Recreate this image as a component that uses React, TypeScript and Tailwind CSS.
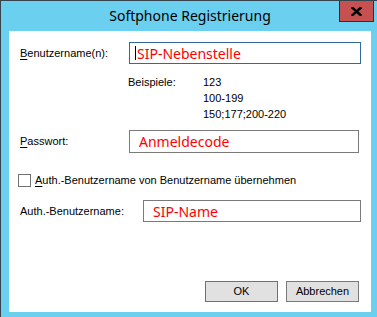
import React from "react";

const F = { fontFamily: '"Liberation Sans", Arial, sans-serif' };
const R = { fontFamily: '"Noto Sans", "Liberation Sans", sans-serif' };

export default function App() {
  return (
    <div className="relative w-[377px] h-[317px] bg-[#6bcff0] border-l border-t border-[#34434c] flex flex-col overflow-hidden">
      {/* title bar */}
      <div className="h-[30px] flex items-center justify-center pl-[2px] pb-[2px]">
        <span className="text-[14px] text-black" style={R}>Softphone Registrierung</span>
      </div>
      <div className="absolute left-[338px] top-0 w-[35px] h-[21px] bg-[#c75050] border border-t-0 border-[#3b2b2b] flex items-center justify-center">
        <svg width="11" height="9" viewBox="0 0 11 9">
          <path d="M1.5 1 L9.5 8 M9.5 1 L1.5 8" stroke="#000" strokeWidth="2.4" strokeLinecap="square" />
        </svg>
      </div>
      {/* client */}
      <div className="ml-[8px] w-[362px] h-[281px] bg-white flex flex-col pl-[11px] pr-[10px] text-[11px] text-black" style={F}>
        <div className="mt-[11px] h-[22px] flex items-center">
          <span className="w-[109px]"><span className="underline underline-offset-2">B</span>enutzername(n):</span>
          <div className="w-[232px] h-[22px] border border-[#2f6a9b] flex items-center pl-[5px]">
            <span className="w-px h-[14px] bg-black mr-[1px]" />
            <span className="text-[14px] text-[#ff0000]" style={R}>SIP-Nebenstelle</span>
          </div>
        </div>
        <div className="mt-[10px] flex leading-[16px] pl-[108px]">
          <span className="w-[75px]">Beispiele:</span>
          <div className="flex flex-col">
            <span>123</span>
            <span>100-199</span>
            <span>150;177;200-220</span>
          </div>
        </div>
        <div className="mt-[8px] h-[23px] flex items-center">
          <span className="w-[109px]"><span className="underline underline-offset-2">P</span>asswort:</span>
          <div className="w-[230px] h-[23px] border border-[#7a7a7a] flex items-center pl-[9px]">
            <span className="text-[14px] text-[#ff0000]" style={R}>Anmeldecode</span>
          </div>
        </div>
        <div className="mt-[21px] h-[13px] flex items-center -ml-[2px]">
          <span className="w-[13px] h-[13px] border border-[#707070] bg-white" />
          <span className="ml-[4px]"><span className="underline underline-offset-2">A</span>uth.-Benutzername von Benutzername übernehmen</span>
        </div>
        <div className="mt-[13px] h-[22px] flex items-center">
          <span className="w-[123px]">Auth.-Benutzername:</span>
          <div className="w-[218px] h-[22px] border border-[#7a7a7a] flex items-center pl-[9px]">
            <span className="text-[14px] text-[#ff0000]" style={R}>SIP-Name</span>
          </div>
        </div>
        <div className="mt-auto mb-[10px] flex justify-end gap-[8px] pr-[2px]">
          <div className="w-[73px] h-[21px] bg-[#e1e1e1] border border-[#3c7fb1] flex items-center justify-center">OK</div>
          <div className="w-[73px] h-[21px] bg-[#e1e1e1] border border-[#7a7a7a] flex items-center justify-center">Abbrechen</div>
        </div>
      </div>
    </div>
  );
}
